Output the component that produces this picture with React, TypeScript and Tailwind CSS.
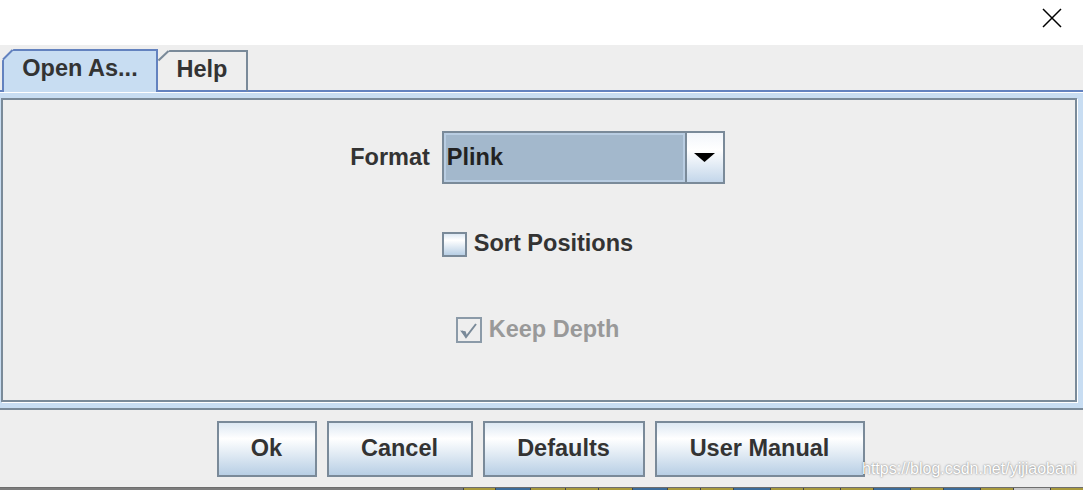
import React from "react";

const segs: [number, number, string][] = [
  [463, 495, "#a99a3d"],
  [495, 530, "#3d6c99"],
  [530, 565, "#a99a3d"],
  [565, 598, "#a99a3d"],
  [598, 632, "#a99a3d"],
  [632, 667, "#3d6c99"],
  [667, 700, "#a99a3d"],
  [700, 733, "#a99a3d"],
  [733, 770, "#3d6c99"],
  [770, 803, "#a99a3d"],
  [803, 840, "#a99a3d"],
  [840, 873, "#a99a3d"],
  [873, 910, "#3d6c99"],
  [910, 943, "#a99a3d"],
  [943, 980, "#3d6c99"],
  [980, 1013, "#a99a3d"],
  [1013, 1050, "#c8c8c8"],
  [1050, 1083, "#a99a3d"],
];

function Btn({ w, label }: { w: string; label: string }) {
  return (
    <div
      className={`${w} h-[56px] border-2 border-[#7a8a99] bg-[linear-gradient(to_bottom,#dde8f3_0%,#ffffff_30%,#b8cfe5_100%)] flex items-center justify-center`}
    >
      {label}
    </div>
  );
}

export default function App() {
  return (
    <div className="relative w-[1083px] h-[490px] overflow-hidden bg-[#eeeeee] flex flex-col font-['Liberation_Sans',Arial,sans-serif] font-bold text-[23.5px] leading-none text-[#333333]">
      {/* title bar */}
      <div className="h-[45px] bg-white flex items-start justify-end shrink-0">
        <svg className="mt-[8px] mr-[21px]" width="20" height="20" viewBox="0 0 20 20">
          <path d="M1 1 L19 19 M19 1 L1 19" stroke="#000" strokeWidth="1.5" fill="none" />
        </svg>
      </div>

      {/* tab row */}
      <div className="h-[47px] flex items-end shrink-0">
        <div className="w-[2px] h-[2px] bg-[#6382bf]" />
        <div className="relative w-[156px] h-[43px] bg-[#c8ddf2] border-t-2 border-l-2 border-r-2 border-[#6382bf] flex items-center justify-center pb-[6px]">
          Open As...
          <svg className="absolute left-[-2px] top-[-2px]" width="12" height="12" viewBox="0 0 12 12">
            <polygon points="0,0 11.5,0 0,11.5" fill="#eeeeee" />
            <line x1="1" y1="10.5" x2="10.5" y2="1" stroke="#6382bf" strokeWidth="2" />
          </svg>
        </div>
        <div className="relative w-[90px] h-[42px] border-t-2 border-r-2 border-t-[#7a8a99] border-r-[#7a8a99] border-b-2 border-b-[#6382bf] flex items-center justify-center pb-[3px]">
          Help
          <svg className="absolute left-0 top-[-2px]" width="12" height="12" viewBox="0 0 12 12">
            <polygon points="0,0 11.5,0 0,11.5" fill="#eeeeee" />
            <line x1="0.5" y1="10.5" x2="10.5" y2="1" stroke="#7a8a99" strokeWidth="2" />
          </svg>
        </div>
        <div className="flex-1 h-[2px] bg-[#6382bf]" />
      </div>

      {/* panel */}
      <div className="shrink-0 bg-[#c8ddf2] border-t border-t-white border-b-2 border-b-[#7a8a99] pt-[5px] pl-[1px] pr-[6px] pb-[6px]">
        <div className="h-[304px] border-2 border-[#7a8a99] shadow-[1px_1px_0_#ffffff] bg-[#eeeeee] flex flex-col items-center pt-[31px] pr-[3px]">
          {/* format row */}
          <div className="flex items-center gap-[12px] h-[53px]">
            <span>Format</span>
            <div className="w-[283px] h-[53px] border-2 border-[#7a8a99] flex">
              <div className="flex-1 border-2 border-[#b9cde2] bg-[#a3b8cc] flex items-center pl-[1px] text-[#222222]">
                Plink
              </div>
              <div className="w-[38px] border-l-2 border-[#7a8a99] bg-[linear-gradient(to_bottom,#f2f6fb_0%,#ffffff_35%,#c3d6ea_100%)] flex items-center justify-center">
                <svg width="21" height="9" viewBox="0 0 21 9">
                  <polygon points="0,0 21,0 10.5,9" fill="#000" />
                </svg>
              </div>
            </div>
          </div>

          {/* sort positions */}
          <div className="mt-[47px] flex items-center gap-[7px] h-[26px]">
            <div className="w-[25px] h-[25px] border-2 border-[#7a8a99] bg-[linear-gradient(to_bottom,#dde8f3_0%,#ffffff_30%,#b8cfe5_100%)]" />
            <span>Sort Positions</span>
          </div>

          {/* keep depth */}
          <div className="mt-[60px] flex items-center gap-[7px] h-[26px]">
            <div className="w-[26px] h-[26px] border-2 border-[#8b9aa8] bg-[#eeeeee] flex items-center justify-center">
              <svg width="22" height="22" viewBox="0 0 22 22">
                <path d="M4 12 L8 18 L18 5" stroke="#7a8a99" strokeWidth="2" fill="none" />
                <path d="M4 12.5 L7 13 L8.5 17.5 Z" fill="#7a8a99" stroke="#7a8a99" strokeWidth="1.5" />
              </svg>
            </div>
            <span className="text-[#999999]">Keep Depth</span>
          </div>
        </div>
      </div>

      {/* buttons */}
      <div className="flex-1 flex justify-center items-start gap-[10px] pt-[11px] pr-[2px]">
        <Btn w="w-[100px]" label="Ok" />
        <Btn w="w-[146px]" label="Cancel" />
        <Btn w="w-[162px]" label="Defaults" />
        <Btn w="w-[210px]" label="User Manual" />
      </div>

      {/* bottom strip */}
      <div className="h-[3px] shrink-0 bg-[#7c7c7c] border-t border-t-[#6e6e6e] relative">
        {segs.map(([a, b, c]) => (
          <div
            key={a}
            className="absolute top-0 bottom-0 border-l border-l-[#444444]"
            style={{ left: a, width: b - a, background: c }}
          />
        ))}
      </div>

      {/* watermark */}
      <div className="absolute left-[862px] top-[461px] text-[16px] font-normal text-white [text-shadow:0_0_2px_rgba(80,80,80,0.85)] leading-none">
        https://blog.csdn.net/yijiaobani
      </div>
    </div>
  );
}
